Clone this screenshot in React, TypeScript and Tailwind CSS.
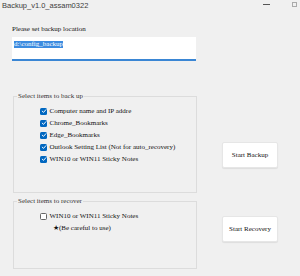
import React from 'react';

const serif = { fontFamily: '"Liberation Serif", "Times New Roman", serif' };

const Check: React.FC<{ checked?: boolean }> = ({ checked }) =>
  checked ? (
    <span className="w-[7px] h-[7px] rounded-[1.5px] bg-[#0067c0] flex items-center justify-center shrink-0">
      <svg width="6" height="6" viewBox="0 0 10 10">
        <path d="M2 5.2 L4.2 7.3 L8.2 2.8" fill="none" stroke="white" strokeWidth="1.6" strokeLinecap="round" strokeLinejoin="round" />
      </svg>
    </span>
  ) : (
    <span className="w-[7px] h-[7px] rounded-[1.5px] border border-[#666] bg-white shrink-0" />
  );

const Row: React.FC<{ label: string; checked?: boolean }> = ({ label, checked }) => (
  <div className="h-[12px] flex items-center gap-[2.5px]">
    <Check checked={checked} />
    <span className="leading-[12px] whitespace-nowrap">{label}</span>
  </div>
);

const Button: React.FC<{ label: string; className?: string }> = ({ label, className }) => (
  <button
    className={`w-[56px] h-[26px] bg-white border border-[#e6e6e6] rounded-[2px] shadow-[0_1px_1px_rgba(0,0,0,0.08)] text-[7px] text-[#111] leading-none ${className}`}
    style={serif}
  >
    {label}
  </button>
);

export default function App() {
  const backupItems = [
    'Computer name and IP addre',
    'Chrome_Bookmarks',
    'Edge_Bookmarks',
    'Outlook Setting List (Not for auto_recovery)',
    'WIN10 or WIN11 Sticky Notes',
  ];

  return (
    <div className="w-[300px] h-[276px] bg-[#f0f0f0] overflow-hidden flex flex-col">
      {/* title bar */}
      <div className="h-[14px] flex items-start">
        <span
          className="ml-[2px] mt-[1px] text-[7.5px] leading-[10px] text-[#3c3c3c]"
          style={{ fontFamily: '"Liberation Sans", Arial, sans-serif' }}
        >
          Backup_v1.0_assam0322
        </span>
        <span className="ml-auto mt-[4px] w-[7px] h-[1px] bg-[#555]" />
        <span className="ml-[22px] mr-[3px] mt-[2px] w-[5px] h-[5px] border border-[#aaa]" />
      </div>

      <div className="pl-[12px] flex flex-col text-[7px] text-[#111]" style={serif}>
        <div className="mt-[11px] leading-[8px]">Please set backup location</div>
        <div className="mt-[4px] w-[184px] h-[24px] bg-white border-b-2 border-[#3a86d4] pl-[2px] pt-[2px]">
          <span className="bg-[#3b8be0] text-white leading-[7px] inline-block">d:\config_backup</span>
        </div>

        <div className="mt-[31px] flex items-start">
          <fieldset className="w-[184px] h-[101px] border border-[#dcdcdc] ml-[1px]">
            <legend className="ml-[3px] px-[1px] leading-[8px] text-[#333]">Select items to back up</legend>
            <div className="pt-[5px] pl-[26px] flex flex-col">
              {backupItems.map((item) => (
                <Row key={item} label={item} checked />
              ))}
            </div>
          </fieldset>
          <Button label="Start Backup" className="ml-[25px] mt-[50px]" />
        </div>

        <div className="mt-[4px] flex items-start">
          <fieldset className="w-[184px] h-[72px] border border-[#dcdcdc] ml-[1px]">
            <legend className="ml-[3px] px-[1px] leading-[8px] text-[#333]">Select items to recover</legend>
            <div className="pt-[5px] pl-[26px] flex flex-col">
              <Row label="WIN10 or WIN11 Sticky Notes" />
              <div className="h-[12px] leading-[12px] ml-[13px] whitespace-nowrap">★(Be careful to use)</div>
            </div>
          </fieldset>
          <Button label="Start Recovery" className="ml-[25px] mt-[19px]" />
        </div>
      </div>
    </div>
  );
}
